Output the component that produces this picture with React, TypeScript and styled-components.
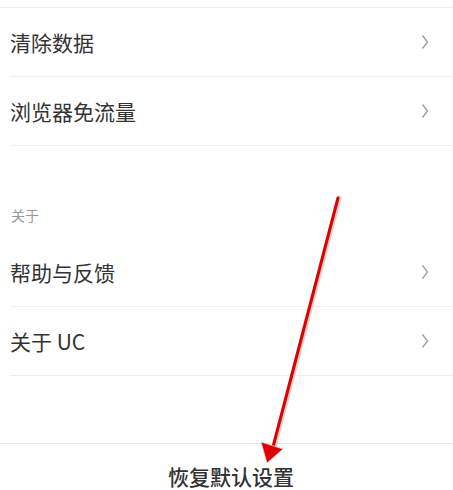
import * as React from "react";
import styled, { createGlobalStyle } from "styled-components";

const GlobalStyle = createGlobalStyle`
  html, body {
    margin: 0;
    padding: 0;
    background: #fff;
    font-family: "Noto Sans CJK SC", "Noto Sans", sans-serif;
  }
`;

const Page = styled.div`
  position: relative;
  width: 453px;
  height: 490px;
  overflow: hidden;
  background: #fff;
`;

const Group = styled.div<{ $top?: boolean }>`
  padding-left: 10px;
  border-top: ${(p) => (p.$top ? "1px solid #efefef" : "none")};
`;

const Row = styled.div`
  display: flex;
  align-items: center;
  justify-content: space-between;
  height: 68px;
  padding-right: 23px;
  border-bottom: 1px solid #efefef;
  font-size: 21px;
  color: #333;
`;

const SectionTitle = styled.div`
  display: flex;
  align-items: flex-end;
  height: 92px;
  padding: 0 0 13px 11px;
  box-sizing: border-box;
  font-size: 14px;
  color: #999;
`;

const Footer = styled.div`
  display: flex;
  justify-content: center;
  align-items: flex-start;
  height: 46px;
  padding: 19px 0 0 9px;
  box-sizing: border-box;
  border-top: 1px solid #e8e8e8;
  font-size: 21px;
  line-height: 26px;
  font-weight: 500;
  color: #333;
`;

const Chevron = () => (
  <svg width="10" height="18" viewBox="0 0 10 18">
    <path d="M2.5 2.5 L7.5 9 L2.5 15.5" fill="none" stroke="#a0a0a0" strokeWidth="1.4" />
  </svg>
);

const Arrow = styled.svg`
  position: absolute;
  left: 0;
  top: 0;
  pointer-events: none;
`;

const Item: React.FC<{ label: string }> = ({ label }) => (
  <Row>
    <span>{label}</span>
    <Chevron />
  </Row>
);

export default function App() {
  return (
    <Page>
      <GlobalStyle />
      <div style={{ height: 7 }} />
      <Group $top>
        <Item label="清除数据" />
        <Item label="浏览器免流量" />
      </Group>
      <SectionTitle>关于</SectionTitle>
      <Group>
        <Item label="帮助与反馈" />
        <Item label="关于 UC" />
      </Group>
      <div style={{ height: 67 }} />
      <Footer>恢复默认设置</Footer>
      <Arrow width="453" height="490">
        <line x1="339" y1="198" x2="274" y2="447" stroke="#d6d0c8" strokeWidth="5" strokeLinecap="round" />
        <line x1="338" y1="198" x2="273" y2="447" stroke="#e00000" strokeWidth="3" strokeLinecap="round" />
        <polygon points="261,442 283,449 267,463" fill="#e00000" stroke="#d6d0c8" strokeWidth="0.8" />
      </Arrow>
    </Page>
  );
}
